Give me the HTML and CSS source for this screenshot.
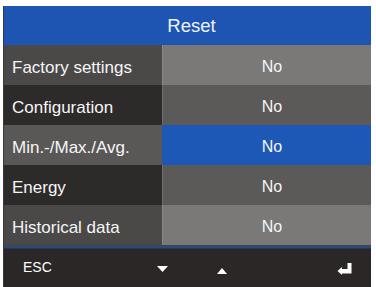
FILE: index.html
```html
<!DOCTYPE html>
<html>
<head>
<meta charset="utf-8">
<link rel="stylesheet" href="styles.css">
</head>
<body>
<div class="screen">
  <div class="header">Reset</div>
  <div class="row odd"><div class="label">Factory settings</div><div class="value">No</div></div>
  <div class="row even"><div class="label">Configuration</div><div class="value">No</div></div>
  <div class="row sel"><div class="label">Min.-/Max./Avg.</div><div class="value">No</div></div>
  <div class="row even"><div class="label">Energy</div><div class="value">No</div></div>
  <div class="row odd"><div class="label">Historical data</div><div class="value">No</div></div>
  <div class="sep"></div>
  <div class="footer">
    <span class="esc">ESC</span>
    <svg class="ico down" width="11" height="6" viewBox="0 0 11 6"><polygon points="0,0 11,0 5.5,6" fill="#fff"/></svg>
    <svg class="ico up" width="10" height="6" viewBox="0 0 10 6"><polygon points="0,6 10,6 5,0" fill="#fff"/></svg>
    <svg class="ico enter" width="15" height="12" viewBox="0 0 15 12"><path d="M10.5 0 H14.5 V10.5 H5 V12 L0.5 8 L5 4 V6 H10.5 Z" fill="#fff"/></svg>
  </div>
</div>
</body>
</html>
```
FILE: styles.css
```css
html, body { margin: 0; padding: 0; background: #fff; }
body { width: 376px; height: 287px; overflow: hidden; }
.screen {
  margin: 6px 6px 0 3px;
  width: 367px;
  height: 281px;
  background: #2b2727;
  border-left: 1px solid #3a3a3a;
  font-family: "Liberation Sans", Arial, sans-serif;
  color: #fff;
  display: flex;
  flex-direction: column;
}
.header {
  height: 39px;
  background: #1e55b2;
  display: flex;
  align-items: center;
  justify-content: center;
  padding-left: 8px;
  font-size: 18.5px;
  color: #eef3fb;
}
.row { height: 40px; display: flex; }
.label {
  width: 150px;
  padding-left: 8px;
  display: flex;
  align-items: center;
  font-size: 17px;
  padding-top: 5px;
  color: #f6f6f6;
}
.value {
  flex: 1;
  display: flex;
  align-items: center;
  justify-content: center;
  padding-left: 10px;
  font-size: 16px;
  padding-top: 4px;
  color: #f6f6f6;
  border-left: 1px solid rgba(255,255,255,0.12);
}
.odd .label { background: #4a4948; }
.odd .value { background: #7a7977; }
.even .label { background: #2d2a2a; }
.even .value { background: #5b5a59; }
.sel .label { background: #5a5856; }
.sel .value { background: #1e58b6; border-left-color: #1e58b6; }
.sep { height: 4px; background: linear-gradient(#3a3f4a, #2d4f8a 50%, #2b2f3a); }
.footer {
  flex: 1;
  display: flex;
  align-items: center;
  position: relative;
  padding-bottom: 2px;
}
.esc { font-size: 14px; margin-left: 19px; }
.ico { position: absolute; }
.down { left: 153px; top: 17px; }
.up { left: 213px; top: 19px; }
.enter { left: 333px; top: 14px; }
```
